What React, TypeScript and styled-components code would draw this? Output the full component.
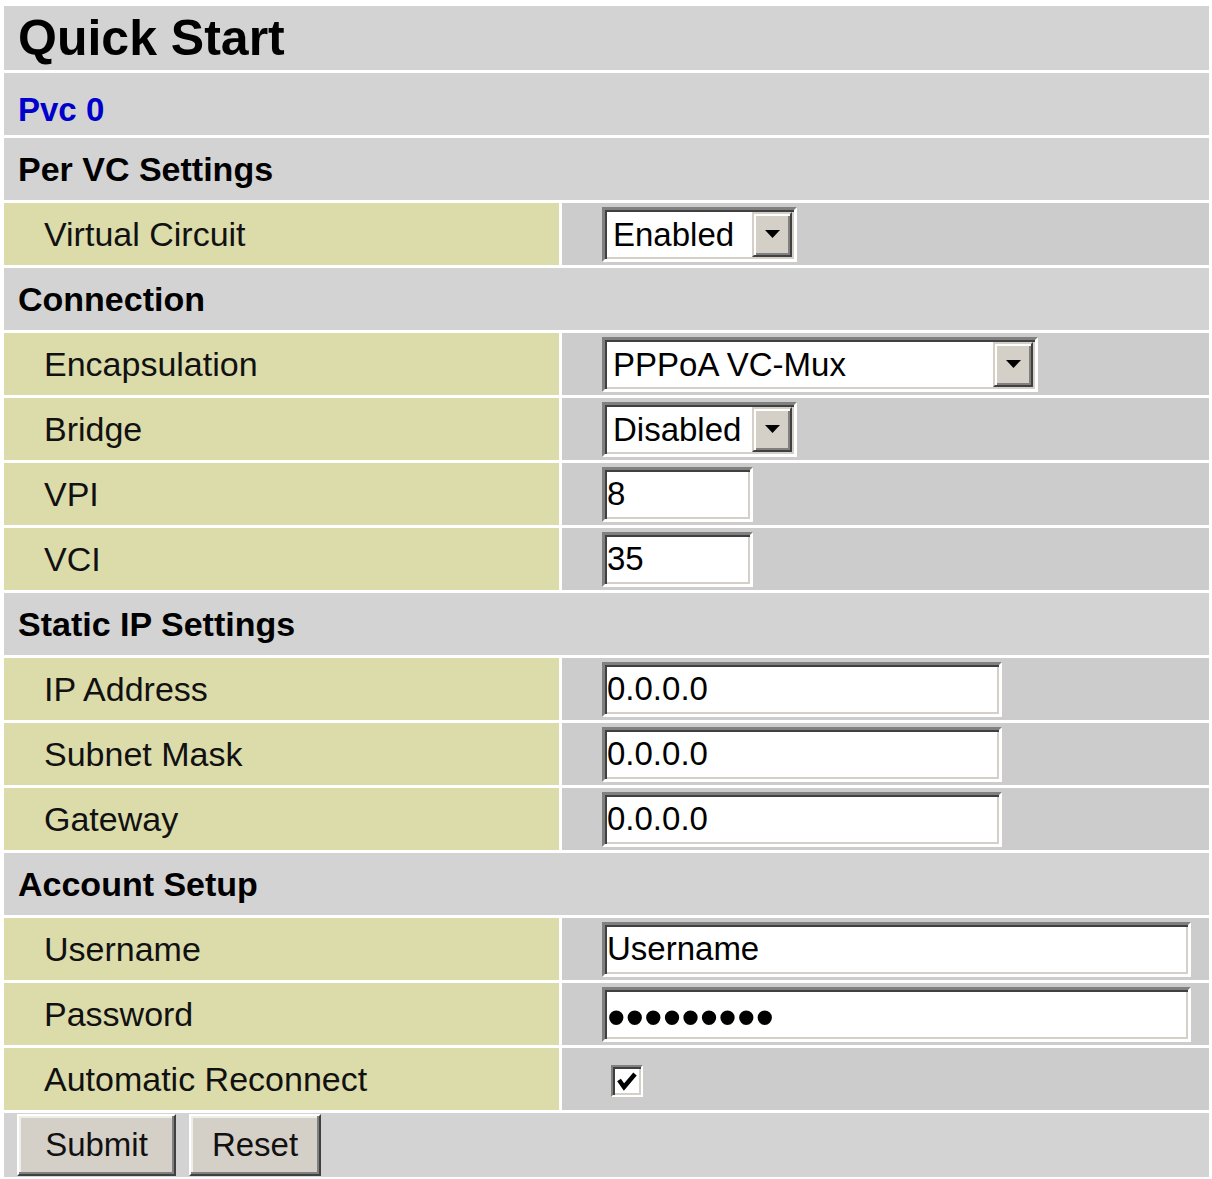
import React from "react";
import styled, { createGlobalStyle } from "styled-components";

const Global = createGlobalStyle`
  html, body { margin: 0; padding: 0; background: #ffffff; }
  body { font-family: "Liberation Sans", Arial, sans-serif; color: #000; }
`;

const Table = styled.div`
  margin: 6px 3px 0 4px;
  width: 1205px;
  display: grid;
  grid-template-columns: 555px 647px;
  gap: 3px;
  font-family: "Liberation Sans", Arial, sans-serif;
`;

type Level = "title" | "sub" | "section";

const HeaderRow = styled.div<{ $level: Level }>`
  grid-column: 1 / -1;
  box-sizing: border-box;
  background: #d3d3d3;
  height: ${(p) => (p.$level === "title" ? 64 : 62)}px;
  display: flex;
  align-items: center;
  padding-left: 14px;
  padding-top: ${(p) => (p.$level === "sub" ? 12 : 0)}px;
  font-weight: bold;
  font-size: ${(p) => (p.$level === "title" ? 50 : p.$level === "sub" ? 33 : 34)}px;
  color: ${(p) => (p.$level === "sub" ? "#0000cc" : "#000")};
  white-space: nowrap;
`;

const LabelCell = styled.div`
  background: #dcdbaa;
  height: 62px;
  display: flex;
  align-items: center;
  padding-left: 40px;
  font-size: 34px;
  color: #111;
  white-space: nowrap;
`;

const ValueCell = styled.div`
  background: #cccccc;
  height: 62px;
  display: flex;
  align-items: center;
  padding-left: 40px;
`;

const SelectFrame = styled.div<{ $w: number }>`
  box-sizing: border-box;
  width: ${(p) => p.$w}px;
  height: 55px;
  display: flex;
  background: #ffffff;
  border: 3px solid;
  border-color: #808080 #ffffff #ffffff #808080;
  box-shadow: inset 2px 2px 0 #404040, inset -2px -2px 0 #d4d0c8;
  padding: 2px;
`;

const NativeSelect = styled.select`
  appearance: none;
  -webkit-appearance: none;
  flex: 1;
  min-width: 0;
  height: 100%;
  border: none;
  outline: none;
  background: transparent;
  font-family: "Liberation Sans", Arial, sans-serif;
  font-size: 33px;
  color: #000;
  padding: 0 0 0 6px;
  margin: 0;
`;

const ArrowButton = styled.span`
  box-sizing: border-box;
  width: 40px;
  height: 100%;
  display: flex;
  align-items: center;
  justify-content: center;
  background: #d4d0c8;
  border: 2px solid;
  border-color: #d4d0c8 #404040 #404040 #d4d0c8;
  box-shadow: inset 2px 2px 0 #ffffff, inset -2px -2px 0 #808080;
  pointer-events: none;
`;

const TextInput = styled.input<{ $w: number; $dots?: boolean }>`
  box-sizing: border-box;
  width: ${(p) => p.$w}px;
  height: 55px;
  margin: 0;
  background: #ffffff;
  border: 3px solid;
  border-color: #808080 #ffffff #ffffff #808080;
  box-shadow: inset 2px 2px 0 #404040, inset -2px -2px 0 #d4d0c8;
  padding: ${(p) => (p.$dots ? "6px 0 0 2px" : "0 0 0 2px")};
  outline: none;
  font-family: "Liberation Sans", Arial, sans-serif;
  font-size: ${(p) => (p.$dots ? 53 : 33)}px;
  color: #000;
`;

const CheckWrap = styled.label`
  position: relative;
  display: inline-block;
  width: 32px;
  height: 32px;
  margin: 4px 0 0 9px;
`;

const CheckInput = styled.input`
  appearance: none;
  -webkit-appearance: none;
  box-sizing: border-box;
  margin: 0;
  width: 32px;
  height: 32px;
  background: #ffffff;
  border: 2px solid;
  border-color: #808080 #ffffff #ffffff #808080;
  box-shadow: inset 2px 2px 0 #404040, inset -2px -2px 0 #d4d0c8;
  display: block;
`;

const CheckMark = styled.svg`
  position: absolute;
  left: 6px;
  top: 6px;
  pointer-events: none;
`;

const ButtonRow = styled.div`
  grid-column: 1 / -1;
  background: #d3d3d3;
  height: 64px;
  display: flex;
  align-items: center;
  gap: 13px;
  padding-left: 13px;
`;

const ClassicButton = styled.button<{ $w: number }>`
  box-sizing: border-box;
  width: ${(p) => p.$w}px;
  height: 62px;
  margin: 0;
  background: #d4d0c8;
  border: 2px solid;
  border-color: #ffffff #404040 #404040 #ffffff;
  box-shadow: inset -2px -2px 0 #808080, inset 2px 2px 0 #eeeeea;
  font-family: "Liberation Sans", Arial, sans-serif;
  font-size: 33px;
  color: #111;
  padding: 0;
  cursor: pointer;
`;

const Arrow = () => (
  <svg width="15" height="8" viewBox="0 0 15 8">
    <polygon points="0,0 15,0 7.5,8" fill="#000" />
  </svg>
);

const Select = ({ w, value, options }: { w: number; value: string; options: string[] }) => (
  <SelectFrame $w={w}>
    <NativeSelect defaultValue={value}>
      {options.map((o) => (
        <option key={o}>{o}</option>
      ))}
    </NativeSelect>
    <ArrowButton>
      <Arrow />
    </ArrowButton>
  </SelectFrame>
);

const Label = ({ children }: { children: React.ReactNode }) => <LabelCell>{children}</LabelCell>;

export default function App() {
  return (
    <>
      <Global />
      <Table>
        <HeaderRow $level="title">Quick Start</HeaderRow>
        <HeaderRow $level="sub">Pvc 0</HeaderRow>
        <HeaderRow $level="section">Per VC Settings</HeaderRow>

        <Label>Virtual Circuit</Label>
        <ValueCell>
          <Select w={195} value="Enabled" options={["Enabled", "Disabled"]} />
        </ValueCell>

        <HeaderRow $level="section">Connection</HeaderRow>

        <Label>Encapsulation</Label>
        <ValueCell>
          <Select
            w={436}
            value="PPPoA VC-Mux"
            options={["PPPoA VC-Mux", "PPPoA LLC", "PPPoE VC-Mux", "PPPoE LLC", "1483 Bridged IP LLC", "1483 Routed IP LLC"]}
          />
        </ValueCell>

        <Label>Bridge</Label>
        <ValueCell>
          <Select w={195} value="Disabled" options={["Enabled", "Disabled"]} />
        </ValueCell>

        <Label>VPI</Label>
        <ValueCell>
          <TextInput $w={151} defaultValue="8" />
        </ValueCell>

        <Label>VCI</Label>
        <ValueCell>
          <TextInput $w={151} defaultValue="35" />
        </ValueCell>

        <HeaderRow $level="section">Static IP Settings</HeaderRow>

        <Label>IP Address</Label>
        <ValueCell>
          <TextInput $w={400} defaultValue="0.0.0.0" />
        </ValueCell>

        <Label>Subnet Mask</Label>
        <ValueCell>
          <TextInput $w={400} defaultValue="0.0.0.0" />
        </ValueCell>

        <Label>Gateway</Label>
        <ValueCell>
          <TextInput $w={400} defaultValue="0.0.0.0" />
        </ValueCell>

        <HeaderRow $level="section">Account Setup</HeaderRow>

        <Label>Username</Label>
        <ValueCell>
          <TextInput $w={589} defaultValue="Username" />
        </ValueCell>

        <Label>Password</Label>
        <ValueCell>
          <TextInput $w={589} $dots type="password" defaultValue="password1" />
        </ValueCell>

        <Label>Automatic Reconnect</Label>
        <ValueCell>
          <CheckWrap>
            <CheckInput type="checkbox" defaultChecked />
            <CheckMark width="20" height="20" viewBox="0 0 20 20">
              <polyline points="2,9 7,16 18,3" fill="none" stroke="#000" strokeWidth="4.5" />
            </CheckMark>
          </CheckWrap>
        </ValueCell>

        <ButtonRow>
          <ClassicButton $w={159}>Submit</ClassicButton>
          <ClassicButton $w={132}>Reset</ClassicButton>
        </ButtonRow>
      </Table>
    </>
  );
}
